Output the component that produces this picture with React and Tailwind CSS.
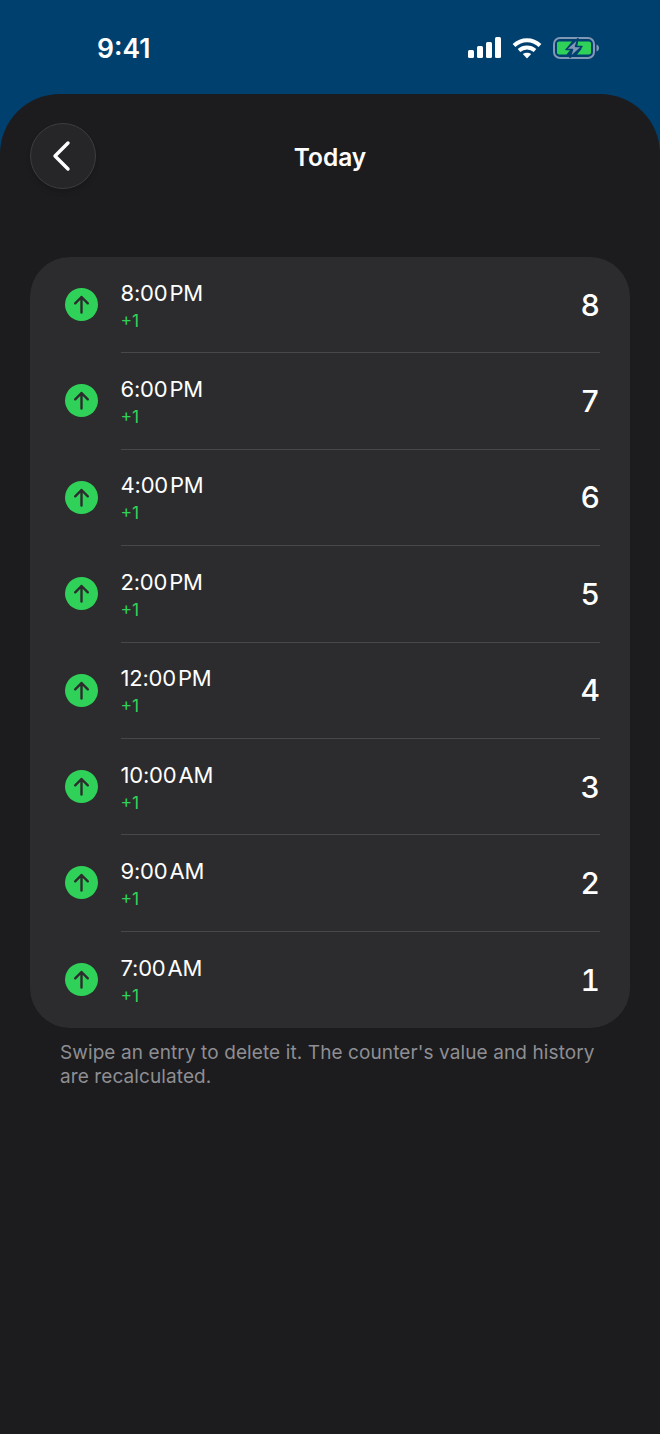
const entries = [
  { time: '8:00', period: 'PM', total: 8 },
  { time: '6:00', period: 'PM', total: 7 },
  { time: '4:00', period: 'PM', total: 6 },
  { time: '2:00', period: 'PM', total: 5 },
  { time: '12:00', period: 'PM', total: 4 },
  { time: '10:00', period: 'AM', total: 3 },
  { time: '9:00', period: 'AM', total: 2 },
  { time: '7:00', period: 'AM', total: 1 },
];

function StatusIcons() {
  return (
    <div className="-mt-[3px] flex items-center">
      <svg width="34" height="21" viewBox="0 0 34 21" fill="white">
        <rect x="0" y="13" width="6" height="8" rx="1.5" />
        <rect x="9" y="9" width="6" height="12" rx="1.5" />
        <rect x="18" y="5" width="6" height="16" rx="1.5" />
        <rect x="27" y="0" width="6" height="21" rx="1.5" />
      </svg>
      <svg className="ml-[10px]" width="30" height="22" viewBox="0 0 30 22" fill="none" stroke="white" strokeWidth="4">
        <path d="M2 8.5C9.5 1.5 20.5 1.5 28 8.5" />
        <path d="M7 13.5C11.8 9.5 18.2 9.5 23 13.5" />
        <path d="M15 21.5L10.8 17C13.2 15.3 16.8 15.3 19.2 17Z" fill="white" stroke="none" />
      </svg>
      <svg className="ml-[11px]" width="46" height="22" viewBox="0 0 46 22" fill="none">
        <rect x="1" y="1" width="40" height="20" rx="6" stroke="#8197b3" strokeWidth="2" />
        <path d="M43.500 7.500c1.500.4 2.500 1.800 2.500 3.500s-1 3.100-2.500 3.500z" fill="#8197b3" />
        <path d="M6 4.500h13l-5 6h5l-5.500 7H6c-1.100 0-2-.9-2-2v-9c0-1.100.9-2 2-2zM25 4.500h11c1.100 0 2 .9 2 2v9c0 1.100-.9 2-2 2H24l5-6h-5z" fill="#30d158" />
        <path d="M25 1.500L13 12.500h6.500L17 20.500 29 9.500h-6.500z" fill="#8197b3" stroke="#00406f" strokeWidth="1.500" strokeLinejoin="round" />
      </svg>
    </div>
  );
}

function EntryRow({ entry, last }) {
  return (
    <div className="flex h-[96.4px] pl-[35px] pr-[30px]">
      <div className="mt-[31px] flex h-[33px] w-[33px] shrink-0 items-center justify-center rounded-full bg-[#30d158]">
        <svg width="19" height="19" viewBox="0 0 19 19" fill="none" stroke="#2c2c2e" strokeWidth="2.400" strokeLinecap="round" strokeLinejoin="round">
          <path d="M9.500 17.500V2M3.200 8.300L9.500 2l6.300 6.300" />
        </svg>
      </div>
      <div className={`ml-[22.500px] flex flex-1 items-center justify-between ${last ? '' : 'border-b border-[#48484a]'}`}>
        <div className="mt-[1px]">
          <p className="text-[22px] leading-[28px] tracking-[-0.2px] text-white">
            {entry.time}
            <span className="ml-[2px]">{entry.period}</span>
          </p>
          <p className="mt-[3px] text-[17.500px] leading-[22px] text-[#30d158]">+1</p>
        </div>
        <span className="text-[30px] font-medium leading-none text-white tabular-nums">{entry.total}</span>
      </div>
    </div>
  );
}

export default function App() {
  return (
    <div className="flex min-h-[1434px] flex-col bg-[#00406f] font-['Inter',sans-serif]">
      <header className="flex h-[94px] items-center justify-between pl-[97px] pr-[61px] pt-[4px]">
        <span className="text-[26.500px] font-semibold text-white">9:41</span>
        <StatusIcons />
      </header>

      <main className="flex-1 rounded-t-[60px] bg-[#1c1c1e] px-[30px] pt-[29px]">
        <div className="grid grid-cols-[66px_1fr_66px] items-center">
          <button
            type="button"
            className="flex h-[66px] w-[66px] items-center justify-center rounded-full border-[1.500px] border-[#3d3d40] bg-[#262628] shadow-md"
          >
            <svg width="22" height="32" viewBox="0 0 22 32" fill="none" stroke="white" strokeWidth="3.400" strokeLinecap="round" strokeLinejoin="round" className="-ml-[3px]">
              <path d="M17 3L4 16l13 13" />
            </svg>
          </button>
          <h1 className="pt-[3px] text-center text-[24.500px] font-semibold text-white">Today</h1>
        </div>

        <section className="mt-[68px] overflow-hidden rounded-[40px] bg-[#2c2c2e]">
          {entries.map((entry, index) => (
            <EntryRow key={entry.total} entry={entry} last={index === entries.length - 1} />
          ))}
        </section>

        <p className="mt-[13px] px-[30px] text-[19px] leading-[24px] tracking-[0.1px] text-[#8e8e93]">
          Swipe an entry to delete it. The counter's value and history are recalculated.
        </p>
      </main>
    </div>
  );
}
